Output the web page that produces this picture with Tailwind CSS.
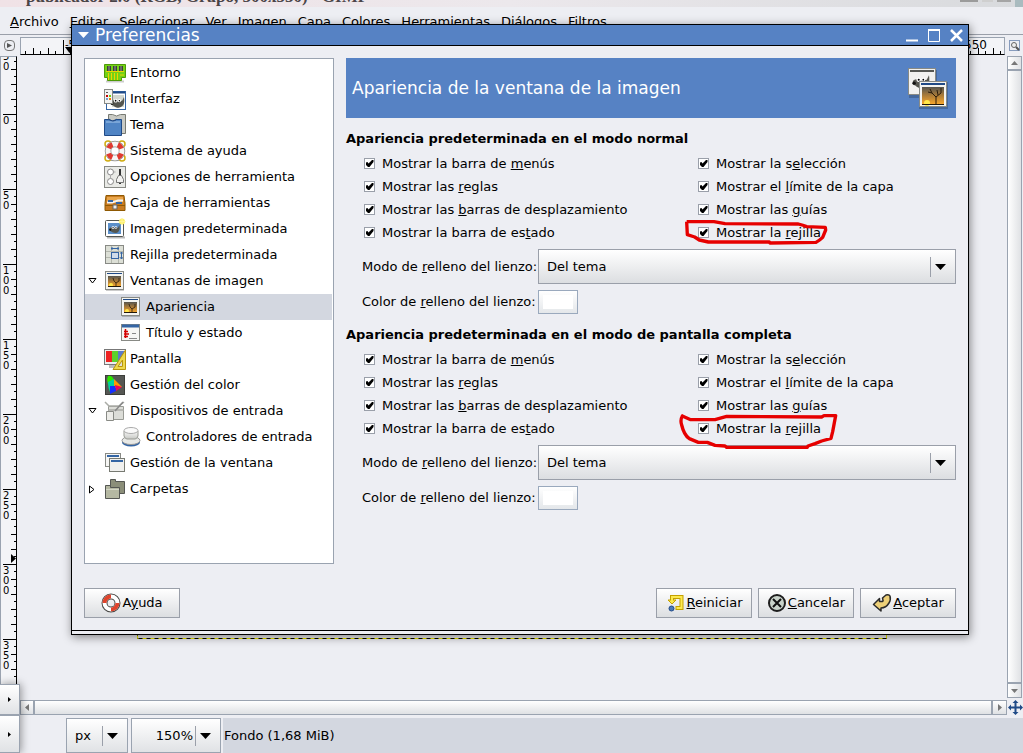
<!DOCTYPE html>
<html lang="es">
<head>
<meta charset="utf-8">
<title>Preferencias</title>
<script src="https://cdn.jsdelivr.net/npm/@tailwindcss/browser@4"></script>
</head>
<body class="relative flex h-screen flex-col overflow-hidden bg-[#edeef3] font-['DejaVu_Sans',sans-serif] text-[13px] leading-4 text-black">

<!-- Shared drawings -->
<svg class="absolute size-0" aria-hidden="true">
  <defs>
    <linearGradient id="dusk" x1="0" y1="0" x2="0" y2="1"><stop offset="0" stop-color="#55554f"/><stop offset=".45" stop-color="#a87a38"/><stop offset="1" stop-color="#ffab2c"/></linearGradient>
    <linearGradient id="metal" x1="0" y1="0" x2="0" y2="1"><stop offset="0" stop-color="#fafafa"/><stop offset="1" stop-color="#c6c8c4"/></linearGradient>
    <pattern id="ticksV" width="16" height="75" patternUnits="userSpaceOnUse">
      <path d="M2 .5H16M13 7.500h3M10 15.500h6M13 22.500h3M10 30.500h6M13 37.500h3M10 45.500h6M13 52.500h3M10 60.500h6M13 67.500h3" stroke="#000"/>
    </pattern>
    <pattern id="ticksH" width="75" height="16" patternUnits="userSpaceOnUse">
      <path d="M.5 2V16M7.500 13v3M15.500 10v6M22.500 13v3M30.500 10v6M37.500 13v3M45.500 10v6M52.500 13v3M60.500 10v6M67.500 13v3" stroke="#000"/>
    </pattern>
    <symbol id="photo" viewBox="0 0 22 22">
      <path d="M2 20.500h18" stroke="#000" stroke-opacity=".2"/>
      <rect x="1.500" y="1.500" width="18" height="18" fill="#f4f4f0" stroke="#888a85"/>
      <rect x="3" y="3" width="15" height="1" fill="#204a87"/>
      <rect x="4" y="6" width="13" height="11" fill="url(#dusk)"/>
      <circle cx="7" cy="15" r="2" fill="#ffe84a"/>
      <path d="M12 17v-4l-2-2-1-3M12 13l3-2V8" fill="none" stroke="#2a1c0c" stroke-opacity=".8"/>
      <path d="M4 16.500h13" stroke="#20180a"/>
    </symbol>
    <symbol id="wilber" viewBox="0 0 16 14">
      <path d="M1 6q2-2 4-1l3 1 5-1 2-4q1 6-1 9-3 4-8 2-2-1-3-2-3 0-2-4z" fill="#55564f"/>
      <circle cx="6" cy="5" r="2" fill="#fff"/><circle cx="10" cy="5" r="1.700" fill="#fff"/><circle cx="6" cy="5" r=".9"/><circle cx="10" cy="5" r=".8"/>
      <ellipse cx="2" cy="8" rx="1.500" ry="1.500" fill="#111"/>
    </symbol>
    <symbol id="caret" viewBox="0 0 11 6"><path d="M0 0h11L5.500 6z"/></symbol>
    <symbol id="tick" viewBox="0 0 11 11"><path d="M2 4.500l1.500-.5 1 1.500L8 2h1.500v2L5.500 9h-1.500L2 7z"/></symbol>
  </defs>
</svg>

<!-- Image window title bar, cut by the top of the screen -->
<header class="flex h-[7px] shrink-0 items-end justify-between overflow-hidden bg-linear-to-r from-[#f0e2e6] via-[#ece8ec] to-[#d8dadd]">
  <p class="h-4 pl-[26px] font-['Liberation_Serif',serif] text-[17px] leading-3 font-bold text-[#4a4447]">publicador 2.0 (RGB, Grupo, 500x350) - GIMP</p>
  <div class="flex h-full items-start gap-1">
    <i class="h-[2px] w-[18px] bg-[#9b9b9b]"></i><i class="h-[2px] w-[11px] bg-[#cfcfcf]"></i><i class="h-[2px] w-[14px] bg-[#a5a5a5]"></i><i class="h-full w-2 bg-[#a9bbbf]"></i>
  </div>
</header>

<nav class="flex h-7 shrink-0 items-center gap-[11px] border-b border-[#9a9fa9] px-[10px] pt-[2px]">
  <a href="#"><u>A</u>rchivo</a><a href="#"><u>E</u>ditar</a><a href="#"><u>S</u>eleccionar</a><a href="#"><u>V</u>er</a><a href="#"><u>I</u>magen</a><a href="#"><u>C</u>apa</a><a href="#">C<u>o</u>lores</a><a href="#"><u>H</u>erramientas</a><a href="#"><u>D</u>iálogos</a><a href="#">Fi<u>l</u>tros</a>
</nav>

<div class="flex h-5 shrink-0 items-center pt-px">
  <div class="flex w-5 shrink-0 pl-1">
    <button aria-label="Menú" class="grid size-[11px] place-items-center rounded-sm border border-[#777]"><svg class="size-[5px]" viewBox="0 0 5 5"><path d="M0 0l5 2.500L0 5z" fill="#555"/></svg></button>
  </div>
  <div class="h-[18px] min-w-0 flex-1 overflow-hidden border border-b-black border-[#9aa3b0] bg-[#f3f4f7]">
    <svg class="h-4 w-full" role="img" aria-label="Regla horizontal">
      <g transform="translate(-33 0)"><rect width="1200" height="16" fill="url(#ticksH)"/></g>
      <text x="44" y="10" font-size="10">-50</text><text x="943" y="11" font-size="12">550</text>
      <path d="M44 9h9l-4.500 6z"/>
    </svg>
  </div>
  <div class="flex w-[18px] shrink-0 justify-end pr-[3px]">
    <svg class="size-[11px]" viewBox="0 0 11 11"><rect x=".5" y=".5" width="10" height="10" fill="none" stroke="#204a87" stroke-dasharray="1 1"/><circle cx="5" cy="5" r="2.500" fill="#eee" stroke="#666"/><path d="M7 7l3 3" stroke="#555" stroke-width="2"/></svg>
  </div>
</div>

<main class="flex min-h-0 flex-1">
  <div class="mt-px w-[17px] shrink-0 overflow-hidden border border-r-black border-[#9aa3b0] bg-[#f3f4f7]">
    <svg class="h-full w-4" role="img" aria-label="Regla vertical">
      <g transform="translate(0 -18)"><rect width="15" height="760" fill="url(#ticksV)"/></g>
      <g font-size="10" transform="translate(1 0)">
        <text x="1" y="3">5</text><text x="1" y="13">0</text>
        <text x="1" y="67">0</text>
        <text x="1" y="142">5</text><text x="1" y="152">0</text>
        <text x="1" y="217">1</text><text x="1" y="227">0</text><text x="1" y="237">0</text>
        <text x="1" y="292">1</text><text x="1" y="302">5</text><text x="1" y="312">0</text>
        <text x="1" y="367">2</text><text x="1" y="377">0</text><text x="1" y="387">0</text>
        <text x="1" y="442">2</text><text x="1" y="452">5</text><text x="1" y="462">0</text>
        <text x="1" y="517">3</text><text x="1" y="527">0</text><text x="1" y="537">0</text>
        <text x="1" y="592">3</text><text x="1" y="602">5</text><text x="1" y="612">0</text>
      </g>
      <path d="M10 497v9l5-4.500z"/>
    </svg>
  </div>
  <div class="relative min-w-0 flex-1">
    <!-- Layer boundary on the canvas -->
    <svg class="absolute top-0 left-[120px] h-[586px] w-[751px]"><rect x=".5" y=".5" width="749" height="583" fill="none" stroke="#000"/><rect x=".5" y=".5" width="749" height="583" fill="none" stroke="#f4f000" stroke-dasharray="4 4"/></svg>
  </div>
  <div class="mt-px mr-px mb-px flex w-[15px] shrink-0 flex-col border border-[#9aa3b0] bg-linear-to-r from-white to-[#dfe1e4]">
    <button aria-label="Subir" class="grid h-[14px] place-items-center border-b-2 border-[#9aa3b0]"><svg class="h-1 w-[7px]" viewBox="0 0 7 4"><path d="M0 4h7L3.500 0z" fill="#777"/></svg></button>
    <div class="flex-1"></div>
    <button aria-label="Bajar" class="grid h-[15px] place-items-center border-t-2 border-[#9aa3b0]"><svg class="h-1 w-[7px]" viewBox="0 0 7 4"><path d="M0 0h7L3.500 4z" fill="#777"/></svg></button>
  </div>
</main>

<div class="flex h-[19px] shrink-0 items-start pt-px pl-5">
  <div class="flex h-[15px] flex-1 border border-[#9aa3b0] bg-linear-to-b from-white to-[#dfe1e4]">
    <button aria-label="Izquierda" class="grid w-[14px] place-items-center border-r-2 border-[#9aa3b0]"><svg class="h-[7px] w-1" viewBox="0 0 4 7"><path d="M4 0v7L0 3.500z" fill="#777"/></svg></button>
    <div class="flex-1"></div>
    <button aria-label="Derecha" class="grid w-[15px] place-items-center border-l-2 border-[#9aa3b0]"><svg class="h-[7px] w-1" viewBox="0 0 4 7"><path d="M0 0v7l4-3.500z" fill="#777"/></svg></button>
  </div>
  <svg class="ml-px h-[15px] w-[15px]" viewBox="0 0 15 15"><path d="M7.500 0l3 3H8.500v3.500H12v-2l3 3-3 3v-2H8.500V12h2l-3 3-3-3h2V8.500H3v2l-3-3 3-3v2h3.500V3h-2z" fill="#204a87"/></svg>
</div>

<footer class="flex h-[35px] shrink-0 items-stretch pl-[66px]">
  <div class="flex w-[62px] items-center border border-[#9aa3b0] bg-linear-to-b from-white to-[#e0e2e5] pl-2">
    <span class="flex-1">px</span><span class="flex h-5 items-center border-l border-[#9a9fa9] pr-[9px] pl-1"><svg class="h-[6px] w-[11px]"><use href="#caret"/></svg></span>
  </div>
  <div class="ml-[3px] flex w-[90px] items-center border border-[#9aa3b0] bg-linear-to-b from-white to-[#e0e2e5]">
    <span class="flex-1 pr-[2px] text-right">150%</span><span class="flex h-5 items-center border-l border-[#9a9fa9] pr-[9px] pl-1"><svg class="h-[6px] w-[11px]"><use href="#caret"/></svg></span>
  </div>
  <p class="ml-[2px] flex flex-1 items-center bg-[#d3d7e0] pl-px">Fondo (1,68 MiB)</p>
</footer>

<!-- Hidden panel handles on the left edge of the screen -->
<div class="absolute bottom-0 left-0 flex h-[69px] w-5 flex-col shadow-[1px_0_8px_#0006]">
  <button aria-label="Panel superior" class="grid h-[31px] place-items-center border border-l-0 border-[#9aa3b0] bg-linear-to-b from-white to-[#e0e2e5]"><svg class="h-[5px] w-[3px]" viewBox="0 0 3 5"><path d="M0 0l3 2.500L0 5z"/></svg></button>
  <button aria-label="Panel inferior" class="grid flex-1 place-items-center border border-l-0 border-[#9aa3b0] bg-linear-to-b from-white to-[#e0e2e5]"><svg class="h-[5px] w-[3px]" viewBox="0 0 3 5"><path d="M0 0l3 2.500L0 5z"/></svg></button>
</div>

<!-- Preferences dialog -->
<section role="dialog" aria-labelledby="dlg" class="absolute top-6 right-[54px] left-[71px] border border-black bg-[#edeef3] shadow-[1px_2px_9px_#0007]">
  <header class="flex h-[21px] items-center border-b border-black bg-[#5682c4] pr-[5px] pl-[6px] text-white">
    <svg class="h-[6px] w-[11px]" fill="#fff"><use href="#caret"/></svg>
    <h1 id="dlg" class="ml-[6px] flex-1 text-[17px]">Preferencias</h1>
    <div class="flex gap-[9px]">
      <button aria-label="Minimizar"><svg class="size-[13px]" viewBox="0 0 13 13"><path d="M0 11.500h12" stroke="#fff" stroke-width="2"/></svg></button>
      <button aria-label="Maximizar"><svg class="size-[13px]" viewBox="0 0 13 13"><path d="M.5 1v11.500h11V1" fill="none" stroke="#fff"/><path d="M0 1h12" stroke="#fff" stroke-width="2"/></svg></button>
      <button aria-label="Cerrar"><svg class="size-[13px]" viewBox="0 0 13 13"><path d="M1 1l11 11M12 1L1 12" stroke="#fff" stroke-width="2.500"/></svg></button>
    </div>
  </header>

  <div class="flex gap-3 px-3 pt-3">
    <ul class="h-[506px] w-[250px] shrink-0 border border-[#9aa3b0] bg-white py-px [&_li]:flex [&_li]:h-[26px] [&_li]:items-center [&_li]:gap-1 [&_li]:pl-[19px] [&_li>svg]:size-[22px] [&_li>svg]:shrink-0">
      <li><svg viewBox="0 0 22 22"><path d="M2 19.500h18" stroke="#ccc" stroke-width="2"/><path d="M.5 2.500h21v13h-4v3h-14v-3h-3z" fill="#73d216" stroke="#4e9a06"/><path d="M2 9.500h18M4.500 11v7M7.500 11v7M10.500 11v7M13.500 11v7M16 13h4" stroke="#edd400"/><path d="M3 4h4v5H3zM9 4h4v5H9zM15 4h4v5h-4z" fill="#3a4038"/><path d="M5 4v5M11 4v5M17 4v5" stroke="#999"/></svg>Entorno</li>
      <li><svg viewBox="0 0 22 22"><rect x="2.500" y="3.500" width="19" height="18" fill="#fff" stroke="#3465a4"/><path d="M3 4.500h18" stroke="#204a87" stroke-width="2"/><rect x="8" y="7" width="12" height="12" fill="#d3d7cf"/><use href="#wilber" x="6" y="8" width="15" height="13"/><rect x=".5" y="1.500" width="8" height="14" fill="#f4f4f2" stroke="#888a85"/><path d="M2 4.500h2" stroke="#555"/><path d="M2 8h2" stroke="#c00" stroke-width="2"/><path d="M5 8h2" stroke="#73d216" stroke-width="2"/><path d="M2 11h2" stroke="#729fcf" stroke-width="2"/><path d="M5 11h2" stroke="#f57900" stroke-width="2"/></svg>Interfaz</li>
      <li><svg viewBox="0 0 22 22"><path d="M4.500.5h4q4 3 8 0h5v19h-17z" fill="#c9cac4" stroke="#777a72"/><path d="M.5 5.500h4q4 3 8 0h5v16H.5z" fill="#4f84c4" stroke="#204a87"/><path d="M2 8h14" stroke="#a5c6ea"/><path d="M5 5q4 4 8 0" fill="none" stroke="#204a87"/></svg>Tema</li>
      <li><svg viewBox="0 0 22 22"><g fill="none" stroke="#d0ac10" stroke-width="1.500"><circle cx="4" cy="4" r="3"/><circle cx="18" cy="4" r="3"/><circle cx="4" cy="18" r="3"/><circle cx="18" cy="18" r="3"/></g><circle cx="11" cy="11" r="7" fill="none" stroke="#8a8a85" stroke-width="6.500"/><circle cx="11" cy="11" r="7" fill="none" stroke="#f6f6f4" stroke-width="5"/><circle cx="11" cy="11" r="7" fill="none" stroke="#e03a30" stroke-width="5" stroke-dasharray="5.500 5.500" stroke-dashoffset="-2.700"/></svg>Sistema de ayuda</li>
      <li><svg viewBox="0 0 22 22"><rect x=".5" y=".5" width="21" height="21" fill="#e9eae6" stroke="#888a85"/><circle cx="6.500" cy="6" r="3" fill="#fff" stroke="#888"/><circle cx="6.500" cy="15.500" r="3" fill="#fff" stroke="#888"/><path d="M6.500 9v3.500M9.500 6h2" stroke="#aaa"/><path d="M16 3v15" stroke="#333" stroke-width="2"/><path d="M12.500 13.500l2-4h3l2 4v3h-7z" fill="#f2f2f0" stroke="#777"/></svg>Opciones de herramienta</li>
      <li><svg viewBox="0 0 22 22"><path d="M2 3.500h18l1 8v7H1v-7z" fill="#c87b22" stroke="#8f5902"/><path d="M3 5h16v5H3z" fill="#e9a64a"/><path d="M3 10.500h5l6-2h5" fill="none" stroke="#f4f4f4" stroke-width="2"/><path d="M4 9h5M12 11h6" stroke="#3465a4" stroke-width="2"/><path d="M1 13.500h20" stroke="#8f5902"/><rect x="9" y="13" width="4" height="4" fill="#eee" stroke="#666"/></svg>Caja de herramientas</li>
      <li><svg viewBox="0 0 22 22"><path d="M3 19.500h18" stroke="#bbb" stroke-width="2"/><rect x="1.500" y="2.500" width="18" height="16" rx="1" fill="#fff" stroke="#555753"/><rect x="4" y="5" width="13" height="11" fill="#5b8fc9"/><use href="#wilber" x="4" y="6" width="13" height="10"/><circle cx="18" cy="3.500" r="3" fill="#fcf06a"/><path d="M18 0v7M14.500 3.500h7" stroke="#fff59a"/></svg>Imagen predeterminada</li>
      <li><svg viewBox="0 0 22 22"><rect x="1.500" y="1.500" width="18" height="18" fill="#dcdfd6" stroke="#888a85"/><path d="M2 7.500h17M2 13.500h17M7.500 2v17M14.500 2v17" stroke="#b4b8ae"/><rect x="7.500" y="8.500" width="7" height="6" fill="#cfdcea" stroke="#3465a4"/><path d="M7 4.500h8M8 3v3M14 3v3M17.500 8v7M16 9h3M16 14h3" stroke="#3465a4"/></svg>Rejilla predeterminada</li>
      <li class="relative"><svg class="absolute left-[3px] !h-[6px] !w-[9px]" viewBox="0 0 9 6"><path d="M1 .5h7L4.500 5z" fill="#fff" stroke="#000"/></svg><svg><use href="#photo"/></svg>Ventanas de imagen</li>
      <li class="mr-px bg-[#d3d7e0]"><svg class="ml-4"><use href="#photo"/></svg>Apariencia</li>
      <li><svg class="ml-4" viewBox="0 0 22 22"><rect x="1.500" y="2.500" width="18" height="16" fill="#f6f6f4" stroke="#888a85"/><path d="M2 4h17" stroke="#3465a4" stroke-width="3"/><path d="M5.500 7v9M4 9.500h4M4 12h5M4 14.500h4" stroke="#d40000" stroke-width="1.500"/><path d="M12 11.500h4M9 16.500h8" stroke="#888"/></svg>Título y estado</li>
      <li><svg viewBox="0 0 22 22"><path d="M5 17h10v3H5z" fill="#bbb"/><rect x=".5" y="1.500" width="21" height="15" fill="#eee" stroke="#777"/><path d="M2 3h6v11H2z" fill="#e22"/><path d="M8 3h6v11H8z" fill="#5cd22d"/><path d="M14 3h6v11h-6z" fill="#5c7cc8"/><path d="M21.500 2v19.500H9z" fill="#edd84c" stroke="#b8960c"/><path d="M18.500 12v6.500H14z" fill="#ddd" stroke="#b8960c"/></svg>Pantalla</li>
      <li><svg viewBox="0 0 22 22"><rect x="1.500" y="1.500" width="19" height="19" fill="#555753" stroke="#3c3e3a"/><path d="M4 2q4-1 6 4L5 12Q2 7 4 2z" fill="#2ee600"/><path d="M4 8l6-3 1 6-5 7q-2-4-2-10z" fill="#00d0a0"/><path d="M10 5l8 8-8 1z" fill="#f90"/><path d="M11 11l7 2-6 4z" fill="#f00060"/><path d="M6 12h5l1 5-6 3z" fill="#1430ff"/></svg>Gestión del color</li>
      <li class="relative"><svg class="absolute left-[3px] !h-[6px] !w-[9px]" viewBox="0 0 9 6"><path d="M1 .5h7L4.500 5z" fill="#fff" stroke="#000"/></svg><svg viewBox="0 0 22 22"><path d="M4.500 6.500h15v13h-15z" fill="#dcddd8" stroke="#999b95"/><path d="M1 2l4 4h10l5-4M4 10h16" fill="none" stroke="#aaaca6" stroke-width="1.500"/><path d="M19 2l-8 9" stroke="#888" stroke-width="1.500"/><path d="M2.500 11.500h7v9h-7z" fill="#ecece8" stroke="#888a85"/></svg>Dispositivos de entrada</li>
      <li><svg class="ml-4" viewBox="0 0 22 22"><ellipse cx="11" cy="16.500" rx="9" ry="4" fill="#3465a4"/><ellipse cx="11" cy="14.500" rx="9" ry="4" fill="#e8e9e6" stroke="#999"/><path d="M4 5v5q1 3 3 3h8q2 0 3-3V5z" fill="url(#metal)" stroke="#999b95"/><ellipse cx="11" cy="4.500" rx="7" ry="3" fill="#fafafa" stroke="#aaa"/></svg>Controladores de entrada</li>
      <li><svg viewBox="0 0 22 22"><rect x="1.500" y="1.500" width="15" height="13" fill="#f6f6f4" stroke="#888a85"/><path d="M3 4h12" stroke="#3465a4" stroke-width="2"/><rect x="5.500" y="6.500" width="15" height="13" fill="#f0f0ee" stroke="#777a72"/><path d="M7 9h12" stroke="#3465a4" stroke-width="2"/></svg>Gestión de la ventana</li>
      <li class="relative"><svg class="absolute left-[4px] !h-[9px] !w-[6px]" viewBox="0 0 6 9"><path d="M.5 1v7L5 4.500z" fill="#fff" stroke="#000"/></svg><svg viewBox="0 0 22 22"><path d="M6.500 13V1.500h5v2h9v12h-6" fill="#8b8e79" stroke="#555753"/><path d="M1.500 20.500v-13h5v2h9v11z" fill="#b5b8a2" stroke="#555753"/><path d="M2 11.500h13" stroke="#d4d6c6"/></svg>Carpetas</li>
    </ul>

    <div class="min-w-0 flex-1">
      <div class="flex h-[60px] items-center justify-between bg-[#5682c4] pr-[7px] pl-[6px] text-white">
        <h2 class="text-[17px] leading-5">Apariencia de la ventana de la imagen</h2>
        <svg class="h-[42px] w-[42px]" viewBox="0 0 42 42">
          <rect x="2" y="3" width="28" height="28" fill="#000" opacity=".2"/><rect x="1.500" y="1.500" width="27" height="26" fill="#f1f1ef" stroke="#888a85"/><path d="M3 4h24" stroke="#555753" stroke-width="2"/><use href="#wilber" x="4" y="7" width="20" height="16"/>
          <rect x="12" y="15" width="29" height="27" fill="#000" opacity=".2"/><rect x="12.500" y="14.500" width="27" height="25" fill="#f4f4f0" stroke="#888a85"/><path d="M14 17h24" stroke="#204a87" stroke-width="2"/><rect x="15" y="20" width="22" height="18" fill="url(#dusk)"/><circle cx="20" cy="36" r="3" fill="#ffe84a"/><path d="M29 38v-8l-4-4-2-4M29 30l5-4v-5M25 26l-4-1M31 28l-1-5" fill="none" stroke="#2a1c0c"/><path d="M15 37.500h22" stroke="#20180a"/>
        </svg>
      </div>

      <section class="pt-[13px]">
        <h3 class="font-bold">Apariencia predeterminada en el modo normal</h3>
        <div class="mt-[5px] grid grid-cols-[334px_1fr] pl-[18px] [&_label]:flex [&_label]:h-[23px] [&_label]:w-fit [&_label]:items-center [&_label]:gap-[7px] [&_span]:grid [&_input]:col-start-1 [&_input]:row-start-1 [&_input]:size-[11px] [&_input]:appearance-none [&_input]:border [&_input]:border-[#9a9fa9] [&_input]:bg-white [&_span>svg]:pointer-events-none [&_span>svg]:col-start-1 [&_span>svg]:row-start-1 [&_span>svg]:size-[11px]">
          <label><span><input type="checkbox" checked><svg><use href="#tick"/></svg></span><b class="font-normal">Mostrar la barra de <u>m</u>enús</b></label>
          <label><span><input type="checkbox" checked><svg><use href="#tick"/></svg></span><b class="font-normal">Mostrar la s<u>e</u>lección</b></label>
          <label><span><input type="checkbox" checked><svg><use href="#tick"/></svg></span><b class="font-normal">Mostrar las <u>r</u>eglas</b></label>
          <label><span><input type="checkbox" checked><svg><use href="#tick"/></svg></span><b class="font-normal">Mostrar el <u>l</u>ímite de la capa</b></label>
          <label><span><input type="checkbox" checked><svg><use href="#tick"/></svg></span><b class="font-normal">Mostrar las <u>b</u>arras de desplazamiento</b></label>
          <label><span><input type="checkbox" checked><svg><use href="#tick"/></svg></span><b class="font-normal">Mostrar las <u>g</u>uías</b></label>
          <label><span><input type="checkbox" checked><svg><use href="#tick"/></svg></span><b class="font-normal">Mostrar la barra de es<u>t</u>ado</b></label>
          <label class="relative"><span><input type="checkbox" checked><svg><use href="#tick"/></svg></span><b class="font-normal">Mostrar la <u>r</u>ejilla</b>
            <svg class="pointer-events-none absolute -top-[11px] -left-[28px] h-10 w-[170px]" viewBox="0 210 510 120" fill="none" stroke="#e60000" stroke-width="10" stroke-linejoin="round"><path d="M50 245L132 245L165 251L385 252Q400 256 410 260L466 262L467 270L458 292Q450 300 438 307L300 309L298 306L115 306L88 300L74 291L52 284L50 245"/></svg>
          </label>
        </div>
        <div class="mt-[5px] flex items-center pl-4">
          <label for="fill1" class="w-44 shrink-0">Modo de <u>r</u>elleno del lienzo:</label>
          <div class="grid flex-1 items-center">
            <select id="fill1" class="col-start-1 row-start-1 h-[35px] appearance-none border border-[#9a9fa9] bg-linear-to-b from-white to-[#dcdee1] pl-2"><option>Del tema</option></select>
            <div class="pointer-events-none col-start-1 row-start-1 flex h-5 items-center justify-self-end border-l border-[#9a9fa9] pr-[10px] pl-1"><svg class="h-[6px] w-[11px]"><use href="#caret"/></svg></div>
          </div>
        </div>
        <div class="mt-[6px] flex items-center pl-4">
          <label for="col1" class="w-44 shrink-0">Color de <u>r</u>elleno del lienzo:</label>
          <button id="col1" aria-label="Color" class="h-6 w-10 border border-[#9aa9bd] bg-linear-to-b from-white to-[#e4e7ea] p-1"><i class="block h-full bg-white"></i></button>
        </div>
      </section>

      <section class="pt-[13px]">
        <h3 class="font-bold">Apariencia predeterminada en el modo de pantalla completa</h3>
        <div class="mt-[5px] grid grid-cols-[334px_1fr] pl-[18px] [&_label]:flex [&_label]:h-[23px] [&_label]:w-fit [&_label]:items-center [&_label]:gap-[7px] [&_span]:grid [&_input]:col-start-1 [&_input]:row-start-1 [&_input]:size-[11px] [&_input]:appearance-none [&_input]:border [&_input]:border-[#9a9fa9] [&_input]:bg-white [&_span>svg]:pointer-events-none [&_span>svg]:col-start-1 [&_span>svg]:row-start-1 [&_span>svg]:size-[11px]">
          <label><span><input type="checkbox" checked><svg><use href="#tick"/></svg></span><b class="font-normal">Mostrar la barra de <u>m</u>enús</b></label>
          <label><span><input type="checkbox" checked><svg><use href="#tick"/></svg></span><b class="font-normal">Mostrar la s<u>e</u>lección</b></label>
          <label><span><input type="checkbox" checked><svg><use href="#tick"/></svg></span><b class="font-normal">Mostrar las <u>r</u>eglas</b></label>
          <label><span><input type="checkbox" checked><svg><use href="#tick"/></svg></span><b class="font-normal">Mostrar el <u>l</u>ímite de la capa</b></label>
          <label><span><input type="checkbox" checked><svg><use href="#tick"/></svg></span><b class="font-normal">Mostrar las <u>b</u>arras de desplazamiento</b></label>
          <label><span><input type="checkbox" checked><svg><use href="#tick"/></svg></span><b class="font-normal">Mostrar las <u>g</u>uías</b></label>
          <label><span><input type="checkbox" checked><svg><use href="#tick"/></svg></span><b class="font-normal">Mostrar la barra de es<u>t</u>ado</b></label>
          <label class="relative"><span><input type="checkbox" checked><svg><use href="#tick"/></svg></span><b class="font-normal">Mostrar la <u>r</u>ejilla</b>
            <svg class="pointer-events-none absolute -top-[11px] -left-[28px] h-[47px] w-[170px]" viewBox="0 18 510 141" fill="none" stroke="#e60000" stroke-width="10" stroke-linejoin="round" stroke-linecap="round"><path d="M37 48Q30 60 35 75Q42 105 58 116L85 127L112 127L135 136L165 138L170 142L412 142L414 138L435 131L455 123L483 115L488 95L497 47L462 47L455 51L170 49L135 59L62 59L37 48"/></svg>
          </label>
        </div>
        <div class="mt-[5px] flex items-center pl-4">
          <label for="fill2" class="w-44 shrink-0">Modo de <u>r</u>elleno del lienzo:</label>
          <div class="grid flex-1 items-center">
            <select id="fill2" class="col-start-1 row-start-1 h-[35px] appearance-none border border-[#9a9fa9] bg-linear-to-b from-white to-[#dcdee1] pl-2"><option>Del tema</option></select>
            <div class="pointer-events-none col-start-1 row-start-1 flex h-5 items-center justify-self-end border-l border-[#9a9fa9] pr-[10px] pl-1"><svg class="h-[6px] w-[11px]"><use href="#caret"/></svg></div>
          </div>
        </div>
        <div class="mt-[6px] flex items-center pl-4">
          <label for="col2" class="w-44 shrink-0">Color de <u>r</u>elleno del lienzo:</label>
          <button id="col2" aria-label="Color" class="h-6 w-10 border border-[#9aa9bd] bg-linear-to-b from-white to-[#e4e7ea] p-1"><i class="block h-full bg-white"></i></button>
        </div>
      </section>
    </div>
  </div>

  <div class="mt-6 flex gap-[6px] px-3 pb-3 [&_button]:flex [&_button]:h-[30px] [&_button]:w-24 [&_button]:items-center [&_button]:justify-center [&_button]:gap-px [&_button]:border [&_button]:border-[#9a9fa9] [&_button]:bg-linear-to-b [&_button]:from-white [&_button]:to-[#dcdee1] [&_svg]:size-5">
    <button class="mr-auto"><svg viewBox="0 0 20 20"><circle cx="10" cy="10" r="6.500" fill="none" stroke="#4a4a48" stroke-width="6"/><circle cx="10" cy="10" r="6.500" fill="none" stroke="#fff" stroke-width="4"/><path d="M3.500 10A6.500 6.500 0 0 1 10 3.500M16.500 10A6.500 6.500 0 0 1 10 16.500" fill="none" stroke="#e0442c" stroke-width="4"/></svg><b class="font-normal">A<u>y</u>uda</b></button>
    <button><svg viewBox="0 0 20 20"><path d="M6 9V4h9.500v11H9.500" fill="none" stroke="#c4a000" stroke-width="4"/><path d="M2 7h8l-4 4z" fill="#fce94f" stroke="#c4a000"/><path d="M6 8V4h9.500v11h-5" fill="none" stroke="#fce94f" stroke-width="2"/><circle cx="5.500" cy="15.500" r="2.500" fill="#4a7ab8" stroke="#204a87"/></svg><b class="font-normal"><u>R</u>einiciar</b></button>
    <button><svg viewBox="0 0 20 20"><circle cx="10" cy="10" r="8" fill="#c9d3ca" stroke="#1e1e1e" stroke-width="2"/><path d="M6 6l8 8M14 6l-8 8" stroke="#111" stroke-width="2"/></svg><b class="font-normal"><u>C</u>ancelar</b></button>
    <button><svg viewBox="0 0 20 20"><path d="M1.500 11.500l6-6v3h2q2 0 1.500-1.500l-.5-2L14 2q3-1 4 1 1 4-1 7-3 5-8 5v3z" fill="#edd078" stroke="#2a2a2a" stroke-width="1.500" stroke-linejoin="round"/></svg><b class="font-normal"><u>A</u>ceptar</b></button>
  </div>
  <div class="h-1 border-t border-black"></div>
</section>
</body>
</html>
